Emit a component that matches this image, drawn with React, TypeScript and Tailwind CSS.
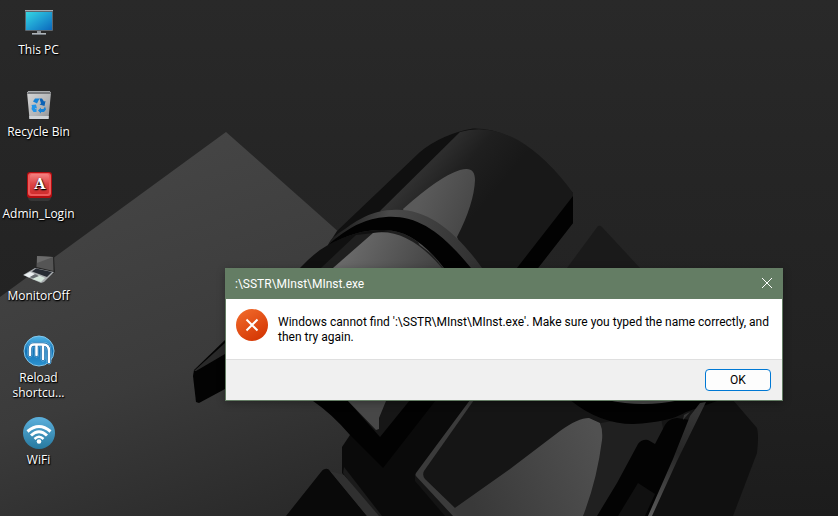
import type { ReactNode } from "react";

function Wallpaper() {
  return (
    <svg
      className="absolute inset-0 h-full w-full"
      viewBox="0 0 838 516"
      preserveAspectRatio="xMidYMid slice"
      aria-hidden="true"
    >
      <defs>
        <linearGradient id="sky" x1="0" y1="0" x2="0" y2="1">
          <stop offset="0" stopColor="#292929" />
          <stop offset="0.35" stopColor="#252525" />
          <stop offset="0.7" stopColor="#222222" />
          <stop offset="1" stopColor="#1c1c1c" />
        </linearGradient>
        <linearGradient id="plane" gradientUnits="userSpaceOnUse" x1="170" y1="140" x2="300" y2="516">
          <stop offset="0" stopColor="#454545" />
          <stop offset="0.55" stopColor="#3b3b3b" />
          <stop offset="1" stopColor="#292929" />
        </linearGradient>
        <linearGradient id="tube" gradientUnits="userSpaceOnUse" x1="415" y1="165" x2="475" y2="215">
          <stop offset="0" stopColor="#343434" />
          <stop offset="0.5" stopColor="#1f1f1f" />
          <stop offset="1" stopColor="#181818" />
        </linearGradient>
        <linearGradient id="shine" gradientUnits="userSpaceOnUse" x1="420" y1="200" x2="475" y2="225">
          <stop offset="0" stopColor="#5a5a5a" />
          <stop offset="1" stopColor="#444444" />
        </linearGradient>
        <linearGradient id="shineLow" gradientUnits="userSpaceOnUse" x1="350" y1="245" x2="430" y2="285">
          <stop offset="0" stopColor="#6a6a6a" />
          <stop offset="1" stopColor="#424242" />
        </linearGradient>
        <linearGradient id="rim" gradientUnits="userSpaceOnUse" x1="330" y1="240" x2="480" y2="268">
          <stop offset="0" stopColor="#1a1a1a" />
          <stop offset="0.35" stopColor="#4a4a4a" />
          <stop offset="1" stopColor="#303030" />
        </linearGradient>
        <linearGradient id="blade" gradientUnits="userSpaceOnUse" x1="470" y1="500" x2="600" y2="440">
          <stop offset="0" stopColor="#393939" />
          <stop offset="1" stopColor="#515151" />
        </linearGradient>
        <linearGradient id="edge" gradientUnits="userSpaceOnUse" x1="705" y1="403" x2="650" y2="516">
          <stop offset="0" stopColor="#3a3a3a" />
          <stop offset="0.45" stopColor="#262626" />
          <stop offset="1" stopColor="#5a5a5a" />
        </linearGradient>
      </defs>
      <rect width="838" height="516" fill="url(#sky)" />
      <path d="M226 132 0 297V516H500V375Z" fill="url(#plane)" />
      <path d="M598 226 567 268H640L602 227Q600 225 598 226Z" fill="#1a1a1a" />

      <path d="M300 268Q315 252 328 245L337 231 420 152Q442 134 473 128.500Q507 128 540 157L573 193V223L538 268Z" fill="#101010" />
      <path d="M380 211 460 132Q488 124 518 140 548 158 573 193V197L517 268H440Z" fill="url(#tube)" />
      <path d="M573 196V223L538 268H517Z" fill="#020202" />
      <path d="M403 209Q440 176 460 170C470 167 475 170 475 180Q474 204 457 237L470 268H430Z" fill="url(#shine)" />
      <path d="M321 268 356 235 400 230 450 268Z" fill="#1f1f1f" />
      <path d="M333 268 373 233Q407 227 442 268Z" fill="url(#shineLow)" />
      <path d="M328 245Q330 238 345 229 370 210 392 210C425 207 455 230 482 268H443Q414 229 383 230 358 229 328 245Z" fill="url(#rim)" />
      <path d="M328 245Q358 218 386 217C416 215 440 230 471 268H444Q414 229 383 230 358 229 328 245Z" fill="#020202" />

      <path d="M225 340 194 370 193 376 196 402 199 403 225 389Z" fill="#030303" />
      <path d="M225 343 194 371 196 371 225 354Z" fill="#292929" />

      <path d="M350 435 342 447V473L375 516H650L700 400H410Z" fill="#0a0a0a" />
      <path d="M343 473 375 516H382L344 467Z" fill="#1b1b1b" />
      <path d="M313 401Q332 414 350 435L383 468 436 400Z" fill="#020202" />
      <path d="M348 401 380 437 410 400Z" fill="#161616" />
      <path d="M348 401H386L379 418V429L376 430Z" fill="#474747" />
      <path d="M325 469Q323 469 321 472L286 516H367L330 471Q328 468 325 469Z" fill="#090909" />
      <path d="M330 471 344 475 379 516H367Z" fill="#303030" />

      <path d="M470 400 416 473Q414 477 418 481L452 516H600V400Z" fill="#3b3b3b" />
      <path d="M474 400 424 471Q422 475 425 479L455 508 520 516H665L700 400Z" fill="#151515" />
      <path d="M601 423 660 412 665 440 600 516H583Z" fill="#202020" />
      <path d="M452 510 510 469 560 431Q578 418 589 418L600 423Q603 430 602 440 597 480 583 516H458Z" fill="url(#blade)" />
      <path d="M415 475 453 516H445L415 481Z" fill="#141414" />

      <path d="M698 400H733L757 428Q759 435 757 453L733 516H650Z" fill="#101010" />
      <path d="M677 418Q668 419 665 425L655 444 648 440Q642 439 638 444L617 483 597 516H650L690 420Z" fill="#030303" />
      <path d="M638 483 655 494 645 516H618Z" fill="#101010" />
      <path d="M570 400Q600 424 633 424 670 422 686 412L720 400Z" fill="#020202" />
      <path d="M607 400Q643 408 680 400Z" fill="#4b4b4b" />
      <path d="M684 415 690 412 683 420Z" fill="#343434" />
      <path d="M700 403 706 402 677 461 652 516H648L673 459 690 416Z" fill="url(#edge)" />
    </svg>
  );
}

function PcIcon() {
  return (
    <svg viewBox="0 0 32 32" className="size-8">
      <defs>
        <linearGradient id="screen" x1="0" y1="0" x2="1" y2="1">
          <stop offset="0" stopColor="#34d6e2" />
          <stop offset="0.5" stopColor="#1f9fd3" />
          <stop offset="1" stopColor="#0b68bd" />
        </linearGradient>
      </defs>
      <rect x="2" y="3" width="28" height="21" rx="1" fill="#5d666e" />
      <rect x="2" y="3" width="28" height="1" fill="#a6abb0" />
      <rect x="3" y="5" width="26" height="18" fill="url(#screen)" />
      <path d="M14 24h4v3h-4z" fill="#8d949a" />
      <path d="M9 26h14v2H9z" fill="#737a81" />
      <path d="M9 26h14v1H9z" fill="#b0b5b9" />
    </svg>
  );
}

function BinIcon() {
  return (
    <svg viewBox="0 0 32 32" className="size-8">
      <defs>
        <linearGradient id="bin" x1="0" y1="0" x2="1" y2="1">
          <stop offset="0" stopColor="#d6d6d6" />
          <stop offset="0.6" stopColor="#b2b4b6" />
          <stop offset="1" stopColor="#8b8d90" />
        </linearGradient>
      </defs>
      <path d="M4 3 28 3 25.500 30H6.500Z" fill="url(#bin)" />
      <path d="M5 2H27L28 5H4Z" fill="#77797c" />
      <path d="M5 2H27V3H5Z" fill="#aaacae" />
      <path d="M6.200 27H25.800L25.500 30H6.500Z" fill="#cfd3d6" />
      <g fill="#1683d8">
        <path d="M12 9.500h4.500l-2.500 5-4-2Z" />
        <path d="M16.500 9.500h2.500l2 3 1.500-.5-1 5-5-1.500 1.500-1Z" fill="#0b62b5" />
        <path d="M22 17.500l1 3-2 2.500H18V24.500l-3-3 3-3v1.500h2.500Z" />
        <path d="M8.500 16l4.500-.5 1 4-1.500-.5-.5 1h1.500v3h-3L8.500 20l.5-2.500Z" fill="#2495e8" />
      </g>
    </svg>
  );
}

function AdminIcon() {
  return (
    <svg viewBox="0 0 32 32" className="size-8">
      <defs>
        <linearGradient id="key" x1="0" y1="0" x2="0" y2="1">
          <stop offset="0" stopColor="#f58080" />
          <stop offset="0.5" stopColor="#dd4545" />
          <stop offset="1" stopColor="#cf2d2d" />
        </linearGradient>
      </defs>
      <rect x="5" y="5" width="23" height="25" rx="4" fill="#555555" opacity="0.35" />
      <rect x="4" y="1" width="25" height="26" rx="3" fill="#b30d10" />
      <rect x="5" y="2" width="23" height="23" rx="3" fill="#ec5a5a" />
      <rect x="7" y="3" width="19" height="20" rx="2" fill="url(#key)" />
      <text
        x="17"
        y="18"
        textAnchor="middle"
        fill="#ffffff"
        className="font-['DejaVu_Serif',serif] text-[14px] font-bold"
      >
        A
      </text>
    </svg>
  );
}

function LaptopIcon() {
  return (
    <svg viewBox="0 0 32 32" className="size-8">
      <path d="M13 2 31 3 32 19 30 21 12 15Z" fill="#252525" />
      <path d="M14 3 30 4 30.500 18 13.500 14Z" fill="#555555" />
      <path d="M14 3 30 4 14 10Z" fill="#6b6b6b" />
      <path d="M12 15 31 19 21 29 18 30 0 22Z" fill="#a9adb0" />
      <path d="M13 15.500 29 19 24 24 9 18.500Z" fill="#262b33" />
      <path d="M7 19 13 21.500 6 24.500 1 22Z" fill="#e9eef0" />
      <path d="M15 22 22 25 18 29 9 26Z" fill="#d5e6dc" />
      <path d="M12 21 16 23 10 25.500 7 24Z" fill="#676d72" />
    </svg>
  );
}

function ReloadIcon() {
  return (
    <svg viewBox="0 0 32 32" className="size-8">
      <defs>
        <linearGradient id="ball" x1="0" y1="0" x2="0" y2="1">
          <stop offset="0" stopColor="#53b6e8" />
          <stop offset="0.5" stopColor="#1272b5" />
          <stop offset="1" stopColor="#2d94d2" />
        </linearGradient>
      </defs>
      <circle cx="16" cy="16" r="15" fill="url(#ball)" stroke="#83c6ea" strokeWidth="1" />
      <g fill="none" strokeLinejoin="round" strokeLinecap="round">
        <path d="M7 20V14Q7 9.500 11 9.500H20Q26 9.500 26 16V27M13.500 11V20M20 11V24" stroke="#7fc0e6" strokeWidth="4.800" />
        <path d="M7 20V14Q7 9.500 11 9.500H20Q26 9.500 26 16V27M13.500 11V20M20 11V24" stroke="#1267a7" strokeWidth="4" />
        <path d="M7 20V14Q7 9.500 11 9.500H20Q26 9.500 26 16V27M13.500 11V20M20 11V24" stroke="#ffffff" strokeWidth="2.500" />
      </g>
    </svg>
  );
}

function WifiIcon() {
  return (
    <svg viewBox="0 0 32 32" className="size-8">
      <defs>
        <linearGradient id="disc" x1="0" y1="0" x2="0" y2="1">
          <stop offset="0" stopColor="#5cb0dc" />
          <stop offset="1" stopColor="#27799f" />
        </linearGradient>
      </defs>
      <circle cx="16" cy="16" r="16" fill="url(#disc)" />
      <g fill="none" stroke="#ffffff" strokeWidth="3">
        <path d="M4.500 14.500Q16 4.500 27.500 14.500" />
        <path d="M8 18.500Q16 11 24 18.500" />
        <path d="M11.500 22Q16 17.500 20.500 22" strokeWidth="2.500" />
      </g>
      <circle cx="16" cy="24.500" r="2.300" fill="#ffffff" />
    </svg>
  );
}

const shortcuts: { label: string; icon: ReactNode }[] = [
  { label: "This PC", icon: <PcIcon /> },
  { label: "Recycle Bin", icon: <BinIcon /> },
  { label: "Admin_Login", icon: <AdminIcon /> },
  { label: "MonitorOff", icon: <LaptopIcon /> },
  { label: "Reload shortcu...", icon: <ReloadIcon /> },
  { label: "WiFi", icon: <WifiIcon /> },
];

function ErrorDialog() {
  return (
    <section
      role="alertdialog"
      aria-labelledby="dialog-title"
      aria-describedby="dialog-message"
      className="absolute top-[268px] left-[225px] w-[558px] border border-[#647d64] bg-white font-['Roboto',sans-serif] text-black shadow-[0_2px_8px_rgba(0,0,0,0.3)]"
    >
      <header className="flex h-[30px] items-center justify-between bg-[#647d64] pr-2 pl-[9px] text-white">
        <h1 id="dialog-title">:\SSTR\MInst\MInst.exe</h1>
        <button type="button" aria-label="Close" className="flex size-[14px] items-start justify-center">
          <svg viewBox="0 0 12 12" className="size-3" fill="none" stroke="currentColor">
            <path d="M1 1 11 11M11 1 1 11" />
          </svg>
        </button>
      </header>
      <div className="flex h-[60px] gap-[10px] px-[10px] pt-[10px]">
        <svg viewBox="0 0 32 32" className="size-8 shrink-0" aria-hidden="true">
          <defs>
            <linearGradient id="alert" x1="0.2" y1="0" x2="0.8" y2="1">
              <stop offset="0" stopColor="#f0692a" />
              <stop offset="1" stopColor="#d33402" />
            </linearGradient>
          </defs>
          <circle cx="16" cy="16" r="16" fill="url(#alert)" />
          <path d="M10.500 10.500 21.500 21.500M21.500 10.500 10.500 21.500" stroke="#ffffff" strokeWidth="2" />
        </svg>
        <p id="dialog-message" className="pt-[6px]">
          Windows cannot find ':\SSTR\MInst\MInst.exe'. Make sure you typed the name correctly, and
          then try again.
        </p>
      </div>
      <footer className="flex justify-end border-t border-[#dfdfdf] bg-[#f0f0f0] px-[11px] py-[9px]">
        <button
          type="button"
          className="h-[22px] w-[66px] rounded border border-[#0078d4] bg-[#fdfdfd]"
        >
          OK
        </button>
      </footer>
    </section>
  );
}

export default function App() {
  return (
    <main className="relative h-screen overflow-hidden bg-[#252525] font-['Open_Sans','Noto_Sans',sans-serif] text-[12px] leading-[15px]">
      <Wallpaper />
      <nav aria-label="Desktop" className="relative flex w-[77px] flex-col pt-[7px]">
        {shortcuts.map((item) => (
          <button
            key={item.label}
            type="button"
            className="flex h-[82px] flex-col items-center gap-[3px] text-white [text-shadow:0_1px_2px_#000,1px_1px_1px_#000]"
          >
            {item.icon}
            <span>{item.label}</span>
          </button>
        ))}
      </nav>
      <ErrorDialog />
    </main>
  );
}
